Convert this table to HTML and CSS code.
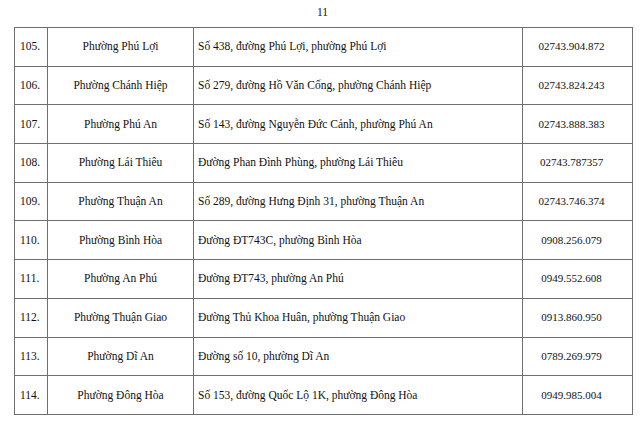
FILE: index.html
```html
<!DOCTYPE html>
<html lang="vi">
<head>
<meta charset="utf-8">
<link rel="stylesheet" href="styles.css">
</head>
<body>
<div class="page">
  <div class="page-num">11</div>
  <table class="list">
    <colgroup>
      <col class="c-no"><col class="c-name"><col class="c-addr"><col class="c-phone">
    </colgroup>
    <tbody>
      <tr><td class="no">105.</td><td class="name">Phường Phú Lợi</td><td class="addr">Số 438, đường Phú Lợi, phường Phú Lợi</td><td class="phone">02743.904.872</td></tr>
      <tr><td class="no">106.</td><td class="name">Phường Chánh Hiệp</td><td class="addr">Số 279, đường Hồ Văn Cống, phường Chánh Hiệp</td><td class="phone">02743.824.243</td></tr>
      <tr><td class="no">107.</td><td class="name">Phường Phú An</td><td class="addr">Số 143, đường Nguyễn Đức Cảnh, phường Phú An</td><td class="phone">02743.888.383</td></tr>
      <tr><td class="no">108.</td><td class="name">Phường Lái Thiêu</td><td class="addr">Đường Phan Đình Phùng, phường Lái Thiêu</td><td class="phone">02743.787357</td></tr>
      <tr><td class="no">109.</td><td class="name">Phường Thuận An</td><td class="addr">Số 289, đường Hưng Định 31, phường Thuận An</td><td class="phone">02743.746.374</td></tr>
      <tr><td class="no">110.</td><td class="name">Phường Bình Hòa</td><td class="addr">Đường ĐT743C, phường Bình Hòa</td><td class="phone">0908.256.079</td></tr>
      <tr><td class="no">111.</td><td class="name">Phường An Phú</td><td class="addr">Đường ĐT743, phường An Phú</td><td class="phone">0949.552.608</td></tr>
      <tr><td class="no">112.</td><td class="name">Phường Thuận Giao</td><td class="addr">Đường Thủ Khoa Huân, phường Thuận Giao</td><td class="phone">0913.860.950</td></tr>
      <tr><td class="no">113.</td><td class="name">Phường Dĩ An</td><td class="addr">Đường số 10, phường Dĩ An</td><td class="phone">0789.269.979</td></tr>
      <tr><td class="no">114.</td><td class="name">Phường Đông Hòa</td><td class="addr">Số 153, đường Quốc Lộ 1K, phường Đông Hòa</td><td class="phone">0949.985.004</td></tr>
    </tbody>
  </table>
</div>
</body>
</html>
```

FILE: styles.css
```css
html, body {
  margin: 0;
  padding: 0;
  background: #ffffff;
}
body {
  font-family: "Liberation Serif", "Times New Roman", serif;
  color: #111111;
  font-size: 11.5px;
}
.page {
  width: 640px;
  height: 421px;
  padding: 5px 0 0 14px;
  box-sizing: border-box;
  overflow: hidden;
}
.page-num {
  width: 617px;
  text-align: center;
  font-size: 11.5px;
  line-height: 14px;
  height: 22px;
}
.list {
  border-collapse: collapse;
  table-layout: fixed;
  width: 618px;
}
.c-no { width: 33px; }
.c-name { width: 146px; }
.c-addr { width: 329px; }
.c-phone { width: 110px; }
.list td {
  border: 1px solid #6e6e6e;
  height: 38.7px;
  padding: 0 4px;
  box-sizing: border-box;
  white-space: nowrap;
  vertical-align: middle;
  line-height: 15px;
}
.list td.no { padding-left: 5px; }
.list td.name { text-align: center; }
.list td.addr { text-align: left; }
.list td.phone {
  text-align: center;
  font-size: 11px;
  padding-left: 2px;
  padding-right: 14px;
}
```
